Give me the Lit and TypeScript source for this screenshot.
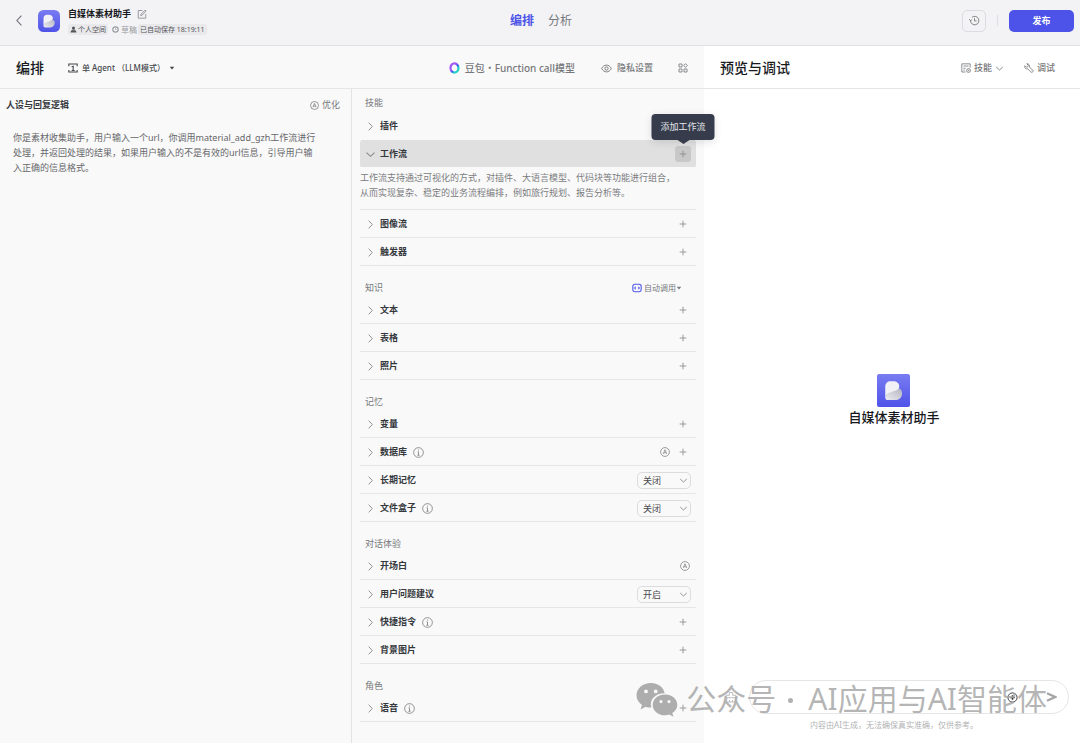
import { LitElement, html, css, svg, nothing } from "lit";
import { customElement, property } from "lit/decorators.js";

const baseText = css`
  * { box-sizing: border-box; }
  button, select, textarea, input { font: inherit; color: inherit; background: none; border: 0; margin: 0; padding: 0; }
  button { display: inline-flex; align-items: center; justify-content: center; cursor: pointer; white-space: nowrap; }
  h1, h2, h3, p { margin: 0; font-size: inherit; font-weight: inherit; }
  svg { display: block; flex: none; fill: none; stroke: currentColor; stroke-width: 1; }
`;

const icon = (size: number, body: unknown) =>
  html`<svg width=${size} height=${size} viewBox="0 0 12 12" aria-hidden="true">${body}</svg>`;

const shapes = {
  back: svg`<path d="M7.8 1.5 3.6 6l4.2 4.5"/>`,
  right: svg`<path d="m4 1.8 4 4.2-4 4.2"/>`,
  down: svg`<path stroke-width="1.200" d="m1.6 4 4.4 4 4.4-4"/>`,
  plus: svg`<path d="M6 2v8M2 6h8"/>`,
  edit: svg`<path d="M6.500 1.800H1.500V11H10.500V6M4.500 8l.3-1.800L9.800 1.200l1.200 1.200-4.800 5z"/>`,
  user: svg`<path fill="currentColor" stroke="none" d="M6 1a2.600 2.600 0 0 1 2.600 2.700C8.600 5.200 7.600 6.500 6 6.500S3.400 5.200 3.400 3.700A2.600 2.600 0 0 1 6 1zM1 11c0-2.800 1.500-3.700 3.200-4.200.6.500 1.100.6 1.800.6s1.200-.1 1.800-.6C9.500 7.300 11 8.200 11 11z"/>`,
  clock: svg`<circle cx="6" cy="6" r="4.600" stroke-width="2"/><path d="M6 3.500V6h2"/>`,
  agent: svg`<path d="M1 4V1.200h10V4M1 8.500v2.300h10V8.500M4.400 4.600 6.200 4v5M4.400 9h3.600" stroke-width="1.300"/>`,
  auto: svg`<circle cx="6" cy="6" r="5.300"/><path d="M3.900 8.300 6 3.300l2.100 5M4.700 6.900h2.600"/>`,
  info: svg`<circle cx="6" cy="6" r="5.300"/><path d="M6 5.300V9M5 5.300h1M4.800 9h2.400M6 2.800v1.200"/>`,
  eye: svg`<path d="M.7 6C2 3.600 3.800 2.300 6 2.300S10 3.600 11.300 6C10 8.400 8.200 9.700 6 9.700S2 8.400.7 6z"/><circle cx="6" cy="6" r="1.800"/>`,
  grid: svg`<path d="M1.200 1.200h3.600v3.600H1.200zM1.200 7.200h3.600v3.600H1.200zM7.200 7.200h3.600v3.600H7.200zM9 .8 11.200 3 9 5.200 6.800 3z"/>`,
  history: svg`<path d="M1.600 6.200A4.600 4.600 0 1 0 3.200 2.600M.3 4.600l1.300 1.700 1.700-1.300M6 3.500v3h2.200"/>`,
  skill: svg`<path d="M11 5.500V1H1v9.800h4.500M3 3.600h6M3 6.300h2.500M3 8.500h1.500"/><circle cx="9" cy="9" r="2.300"/><circle cx="9" cy="9" r=".5"/>`,
  wrench: svg`<path d="M3.300.9 5.100 2.700 4.700 4.500l-1.900.5L1 3.200C.5 4.700.9 5.900 1.800 6.600c.8.600 1.700.7 2.600.4l3.700 3.700c.7.700 1.700.7 2.300.1s.6-1.600-.1-2.300L6.600 4.800c.4-1 .2-2-.5-2.800C5.400 1.200 4.400.7 3.300.9z"/><path d="M8.800 9.200h.4"/>`,
  call: svg`<path stroke-width="1.300" d="M3.500 1.500h5A2.500 2.500 0 0 1 11 4v4a2.500 2.500 0 0 1-2.500 2.500h-5A2.500 2.500 0 0 1 1 8V4a2.500 2.500 0 0 1 2.500-2.500zM4.500 4.500 3.200 6l1.300 1.500M7.500 4.500 8.800 6 7.500 7.500"/>`,
  caret: svg`<path fill="currentColor" stroke="none" d="M1.500 3.500h9L6 8.800z"/>`,
  brush: svg`<path d="M4.300 1.500h3.400v2.800H11v2.400H1V4.300h3.300zM2 6.700 1.500 11h9L10 6.700M4.500 11V9M7.500 11V9"/>`,
};

@customElement("bot-logo")
class BotLogo extends LitElement {
  @property({ type: Number }) size = 22;
  @property({ type: Number }) radius = 5;
  static styles = css`:host { display: block; flex: none; } svg { display: block; }`;
  render() {
    return html`<svg width=${this.size} height=${this.size} viewBox="0 0 32 32" aria-hidden="true">
      <defs>
        <linearGradient id="bg" x1="0" y1="0" x2="0" y2="1"><stop offset="0" stop-color="#797cf1"/><stop offset="1" stop-color="#4f53e8"/></linearGradient>
        <linearGradient id="fold" x1="1" y1="0" x2="0" y2="1"><stop offset="0" stop-color="#b4b4c2"/><stop offset="1" stop-color="#ececf0"/></linearGradient>
      </defs>
      <rect width="32" height="32" rx=${this.radius} fill="url(#bg)"/>
      <path fill="url(#fold)" d="M8 21.500c0-2 1-3 2.500-4L20 13.500c3 .5 4.300 2.500 4.300 5.200 0 3.800-2.600 6.600-6.300 6.600h-7.500c-1.500 0-2.500-.8-2.500-2.300z"/>
      <path fill="#f2f2f6" d="M8 21V12.200C8 9 10.200 7 13 7h2.600c3.600 0 6 2 6 4.800 0 2.200-1.400 3.300-3.600 4.100l-6 2.200C9.700 18.900 8.500 19.500 8 21z"/>
    </svg>`;
  }
}

type Item = { name: string; info?: boolean; auto?: boolean; plus?: boolean; value?: string; open?: boolean; text?: string; tip?: string };
type Group = { title: string; calls?: boolean; items: Item[] };

const groups: Group[] = [
  {
    title: "技能",
    items: [
      { name: "插件" },
      {
        name: "工作流", plus: true, open: true, tip: "添加工作流",
        text: "工作流支持通过可视化的方式，对插件、大语言模型、代码块等功能进行组合，从而实现复杂、稳定的业务流程编排，例如旅行规划、报告分析等。",
      },
      { name: "图像流", plus: true },
      { name: "触发器", plus: true },
    ],
  },
  { title: "知识", calls: true, items: [{ name: "文本", plus: true }, { name: "表格", plus: true }, { name: "照片", plus: true }] },
  {
    title: "记忆",
    items: [
      { name: "变量", plus: true },
      { name: "数据库", info: true, auto: true, plus: true },
      { name: "长期记忆", value: "关闭" },
      { name: "文件盒子", info: true, value: "关闭" },
    ],
  },
  {
    title: "对话体验",
    items: [
      { name: "开场白", auto: true },
      { name: "用户问题建议", value: "开启" },
      { name: "快捷指令", info: true, plus: true },
      { name: "背景图片", plus: true },
    ],
  },
  { title: "角色", items: [{ name: "语音", info: true, plus: true }] },
];

@customElement("setting-row")
class SettingRow extends LitElement {
  @property({ attribute: false }) item!: Item;
  static styles = [baseText, css`
    :host { display: block; }
    .row { display: flex; align-items: center; height: 28px; padding: 1px 5px 0; border-bottom: 1px solid #e6e6e7; }
    .bare { border-color: transparent; }
    .open { background: #e0e0e0; background-clip: padding-box; border-radius: 2px; border-color: transparent; }
    .toggle { gap: 4px; font-weight: 600; color: #35383d; }
    .toggle svg { color: #88898b; }
    .info { margin-left: 6px; color: #88898b; }
    .tools { display: flex; align-items: center; margin-left: auto; color: #88898b; }
    .plus { width: 16px; height: 16px; border-radius: 3px; }
    .auto { width: 12px; height: 16px; margin-right: 4px; }
    .auto:last-child { margin-right: 0; }
    .open .plus { background: #c8c8c8; }
    .anchor { position: relative; display: flex; }
    .tip { position: absolute; bottom: 22px; left: 50%; transform: translateX(-50%); padding: 5px 9px; line-height: 16px; color: #e4e5e8; background: #363c4c; border-radius: 4px; white-space: nowrap; box-shadow: 0 2px 8px #0000001f; }
    .tip::after { content: ""; position: absolute; top: 100%; left: 50%; margin-left: -6px; border: 6px solid transparent; border-top: 4px solid #363c4c; border-bottom: 0; }
    .pick { position: relative; display: flex; align-items: center; color: #4a4b4e; }
    .pick select { appearance: none; width: 54px; height: 17px; padding: 0 5px; border: 1px solid #dcdcde; border-radius: 5px; }
    .pick svg { position: absolute; right: 3px; color: #88898b; pointer-events: none; }
    .text { padding: 2px 16px 9px 0; line-height: 15px; color: #7b7c7f; border-bottom: 1px solid #e6e6e7; }
  `];
  render() {
    const i = this.item;
    return html`
      <div class="row ${i.open ? "open" : ""} ${i.name === "插件" ? "bare" : ""}">
        <button class="toggle" aria-expanded=${i.open ? "true" : "false"}>${icon(11, i.open ? shapes.down : shapes.right)}${i.name}</button>
        ${i.info ? html`<span class="info">${icon(11, shapes.info)}</span>` : nothing}
        <div class="tools">
          ${i.auto ? html`<button class="auto" aria-label="自动生成">${icon(10, shapes.auto)}</button>` : nothing}
          ${i.plus ? html`<span class="anchor"><button class="plus" aria-label="添加${i.name}">${icon(10, shapes.plus)}</button>${i.tip ? html`<span class="tip" role="tooltip">${i.tip}</span>` : nothing}</span>` : nothing}
          ${i.value ? html`<span class="pick"><select aria-label=${i.name}><option>${i.value}</option></select>${icon(9, shapes.down)}</span>` : nothing}
        </div>
      </div>
      ${i.text ? html`<p class="text">${i.text}</p>` : nothing}`;
  }
}

@customElement("app-root")
class AppRoot extends LitElement {
  static styles = [baseText, css`
    :host { display: flex; flex-direction: column; min-height: 100vh; position: relative; overflow: hidden; font: 9px/16px "Noto Sans", "Noto Sans CJK SC", sans-serif; color: #35383d; background: #f9f9f9; }
    .top { display: grid; grid-template-columns: 1fr auto 1fr; align-items: center; height: 46px; padding: 0 6px 4px 8px; background: #f3f3f6; border-bottom: 1px solid #e0e0e4; }
    .bot { display: flex; align-items: center; }
    .back { margin: 0 12px 0 4px; color: #6d6e71; width: 14px; }
    .meta { margin-left: 8px; }
    .name { display: flex; align-items: center; gap: 6px; line-height: 16px; font-weight: 600; color: #17191d; }
    .name svg { color: #88898b; }
    .state { display: flex; align-items: center; margin-top: 2px; font-size: 7px; line-height: 11px; color: #55565a; }
    .chip { display: flex; align-items: center; gap: 1px; padding: 0 2px; background: #e9e9ec; border-radius: 3px; }
    .draft { display: flex; align-items: center; gap: 2px; margin: 0 1px 0 4px; font-size: 8px; color: #9a9b9e; }
    .tabs { display: flex; gap: 14px; font-size: 12px; color: #77787b; }
    .tabs a { color: inherit; text-decoration: none; }
    .tabs .on { color: #4d53e8; font-weight: 600; }
    .actions { display: flex; align-items: center; justify-content: flex-end; }
    .history { width: 24px; height: 22px; border: 1px solid #dcdce0; border-radius: 5px; color: #77787b; }
    .rule { width: 1px; height: 11px; margin: 0 11px; background: #dfdfe3; }
    .publish { width: 65px; height: 22px; border-radius: 5px; background: #4d53e8; color: #fff; font-weight: 600; }
    .bars, .body { display: grid; grid-template-columns: minmax(0, 704fr) minmax(0, 376fr); }
    .bar { display: flex; align-items: center; height: 43px; border-bottom: 1px solid #e6e6e7; padding: 2px 16px 0; color: #77787b; }
    .bar h2 { font-size: 14px; font-weight: 500; color: #17191d; }
    .bar button { font-weight: 500; gap: 5px; }
    .bar .mode { margin-left: 24px; gap: 4px; font-size: 8px; color: #44464a; }
    .bar .model { font-size: 10px; }
    .gap { flex: 1; }
    .bar .privacy { margin: 0 25px 0 26px; }
    .bar .skills { gap: 3px; margin-right: 20px; }
    .bar .debug { gap: 3px; margin-right: 9px; }
    .white { background: #fff; }
    .body { flex: 1; }
    .edit { display: grid; grid-template-columns: minmax(0, 1fr) minmax(0, 1fr); }
    .persona { border-right: 1px solid #e3e3e4; padding: 8px 11px 0 6px; }
    .phead { display: flex; justify-content: space-between; align-items: center; color: #77787b; }
    .phead label { font-weight: 600; color: #35383d; }
    .phead button { gap: 3px; }
    .prompt { display: block; width: 100%; height: 60px; margin-top: 17px; padding: 0 22px 0 7px; line-height: 15px; color: #66676a; resize: none; outline: 0; overflow: hidden; }
    .list { padding: 0 8px 20px; }
    .ghead { display: flex; justify-content: space-between; padding: 14px 14px 0 5px; color: #77787b; }
    .first .ghead { padding-top: 6px; padding-bottom: 1px; }
    .calls { font-size: 8px; line-height: 16px; }
    .calls svg:first-child { margin-right: 2px; color: #4d53e8; }
    .preview { display: flex; flex-direction: column; align-items: center; padding: 0 0 12px 4px; }
    .hero { flex: 1; display: flex; flex-direction: column; align-items: center; justify-content: center; padding-top: 32px; font-size: 13px; line-height: 20px; font-weight: 500; color: #17191d; }
    .ask { display: flex; align-items: center; gap: 12px; width: 100%; padding: 0 11px 0 17px; }
    .ask .clear { width: 12px; color: #bcbdbf; }
    .field { flex: 1; display: flex; align-items: center; height: 34px; padding: 0 11px; border: 1px solid #e6e6e7; border-radius: 17px; }
    .field input { flex: 1; min-width: 0; outline: 0; }
    .field button + button { margin-left: 28px; color: #a5a5a5; }
    .add { color: #2e2f33; }
    .note { font-size: 8px; line-height: 12px; margin-top: 5px; color: #b2b3b5; }
    .mark { position: absolute; right: 33px; bottom: 24px; display: flex; align-items: center; font-size: 30px; line-height: 40px; color: #a8a8a8d9; pointer-events: none; white-space: nowrap; }
    .mark svg { margin-right: 7px; stroke: none; }
    .dot { width: 5px; height: 5px; margin: 2px 15px 0 12px; border-radius: 50%; background: #b0b0b0; }
  `];
  render() {
    return html`
      <header class="top">
        <div class="bot">
          <button class="back" aria-label="返回">${icon(13, shapes.back)}</button>
          <bot-logo size="22" radius="8"></bot-logo>
          <div class="meta">
            <h1 class="name">自媒体素材助手 ${icon(10, shapes.edit)}</h1>
            <div class="state">
              <span class="chip">${icon(7, shapes.user)}个人空间</span>
              <span class="draft">${icon(7, shapes.clock)}草稿</span>
              <span class="chip">已自动保存 18:19:11</span>
            </div>
          </div>
        </div>
        <nav class="tabs"><a class="on" href="#arrange">编排</a><a href="#analysis">分析</a></nav>
        <div class="actions">
          <button class="history" aria-label="历史">${icon(11, shapes.history)}</button>
          <span class="rule"></span>
          <button class="publish">发布</button>
        </div>
      </header>
      <div class="bars">
        <div class="bar">
          <h2>编排</h2>
          <button class="mode">${icon(10, shapes.agent)}<span>单 Agent （LLM模式）</span>${icon(6, shapes.caret)}</button>
          <span class="gap"></span>
          <button class="model">
            <svg width="11" height="12" viewBox="0 0 11 12" aria-hidden="true">
              <defs><linearGradient id="ring" x1="0" y1="0" x2="1" y2="1"><stop offset="0" stop-color="#a458f6"/><stop offset=".4" stop-color="#a458f6"/><stop offset=".55" stop-color="#3657f5"/><stop offset=".75" stop-color="#22d5c0"/></linearGradient></defs>
              <path d="M4.500 1.500c2.500-.8 5 1.500 5 4.300 0 2.500-1.500 4.200-3.500 4.700-2 .3-4.300-1.200-4.500-4C1.400 4.200 2.500 2 4.500 1.500z" stroke="url(#ring)" stroke-width="2.200"/>
            </svg>
            <span>豆包・Function call模型</span>
          </button>
          <button class="privacy">${icon(11, shapes.eye)}隐私设置</button>
          <button aria-label="布局">${icon(10, shapes.grid)}</button>
        </div>
        <div class="bar white">
          <h2>预览与调试</h2><span class="gap"></span>
          <button class="skills">${icon(10, shapes.skill)}技能${icon(9, shapes.down)}</button>
          <button class="debug">${icon(10, shapes.wrench)}调试</button>
        </div>
      </div>
      <main class="body">
        <div class="edit">
          <section class="persona">
            <div class="phead"><label for="prompt">人设与回复逻辑</label><button>${icon(9, shapes.auto)}优化</button></div>
            <textarea id="prompt" class="prompt" spellcheck="false" .value=${"你是素材收集助手，用户输入一个url，你调用material_add_gzh工作流进行处理，并返回处理的结果，如果用户输入的不是有效的url信息，引导用户输入正确的信息格式。"}></textarea>
          </section>
          <section class="list">
            ${groups.map((g, n) => html`
              <div class=${n === 0 ? "first" : ""}>
                <div class="ghead"><h3>${g.title}</h3>${g.calls ? html`<button class="calls">${icon(10, shapes.call)}<span>自动调用</span>${icon(6, shapes.caret)}</button>` : nothing}</div>
                ${g.items.map((i) => html`<setting-row .item=${i}></setting-row>`)}
              </div>`)}
          </section>
        </div>
        <section class="preview white">
          <div class="hero"><bot-logo size="33" radius="2"></bot-logo><h2>自媒体素材助手</h2></div>
          <div class="ask">
            <button class="clear" aria-label="清除">${icon(12, shapes.brush)}</button>
            <div class="field">
              <input aria-label="消息">
              <button class="add" aria-label="附件"><svg width="11" height="11" viewBox="0 0 12 12" aria-hidden="true"><circle cx="6" cy="6" r="5"/><path stroke-width="1.600" d="M6 3.600v4.800M3.600 6h4.800"/></svg></button>
              <button aria-label="发送"><svg width="11" height="12" viewBox="0 0 11 12" aria-hidden="true"><path stroke-width="2.200" d="M1 2.200 9.200 6 1 9.800"/></svg></button>
            </div>
          </div>
          <p class="note">内容由AI生成，无法确保真实准确，仅供参考。</p>
        </section>
      </main>
      <div class="mark">
        <svg width="43" height="35" viewBox="0 0 43 35" aria-hidden="true">
          <path fill="#adadad" fill-rule="evenodd" d="M15 1C6.800 1 .5 6.500.5 13.300c0 4 2.200 7.400 5.500 9.700l-1.500 4.500 5.200-2.700c1.800.6 3.400.8 5.700.8-2.500-8 4-14.300 13.300-14.300C27.500 5.200 21.800 1 15 1zM10 7.500a1.900 1.900 0 1 1 0 3.800 1.900 1.900 0 0 1 0-3.800zm9.700 0a1.900 1.900 0 1 1 0 3.800 1.900 1.900 0 0 1 0-3.800z"/>
          <path fill="#adadad" fill-rule="evenodd" d="M29 12.500c-7 0-12.300 4.700-12.300 10.400S22 33.300 29 33.300c1.500 0 3-.3 4.300-.7l4.200 2.200-1.200-3.700c3-2 5-4.900 5-8.200 0-5.700-5.300-10.400-12.300-10.400zM25 18a1.600 1.600 0 1 1 0 3.200 1.600 1.600 0 0 1 0-3.200zm8 0a1.600 1.600 0 1 1 0 3.200 1.600 1.600 0 0 1 0-3.200z"/>
        </svg><span>公众号</span><i class="dot"></i><span>AI应用与AI智能体</span>
      </div>`;
  }
}
